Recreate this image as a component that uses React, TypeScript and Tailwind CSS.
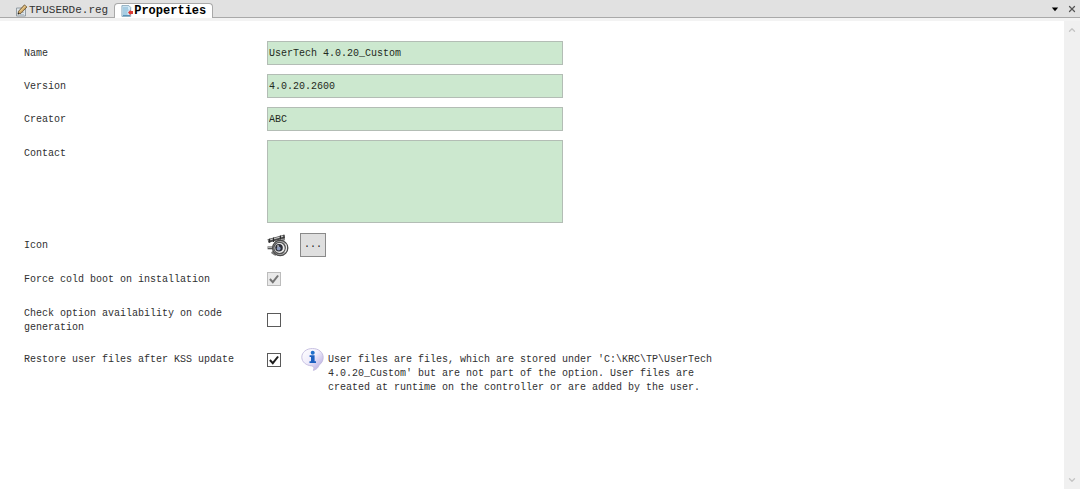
import { useState, type ReactNode } from 'react'
import { ChevronDown, ChevronUp, X } from 'lucide-react'

function EditIcon() {
  return (
    <svg className="w-[13px] h-[13px] shrink-0" viewBox="0 0 13 13" aria-hidden="true">
      <path d="M1.500 4h9v8h-9z" fill="#dfe6ea" stroke="#8b949c" strokeWidth="0.9" />
      <path d="M6 8.500h3M5 10.500h4" stroke="#a9b7c4" strokeWidth="0.8" />
      <path d="M3 10 3.600 7.200 9.400.9 11.900 3 6 9.300z" fill="#cfa765" stroke="#6e5835" strokeWidth="0.9" />
      <path d="M5 7.400 10.400 1.900" stroke="#f4dca6" strokeWidth="0.9" />
      <path d="m2.700 10.400.5-1.800 1.300 1.200z" fill="#222" />
    </svg>
  )
}

function PropertiesIcon() {
  return (
    <svg className="w-3 h-3 shrink-0" viewBox="0 0 12 12" aria-hidden="true">
      <path d="M.9.6h7l1.800 1.800v9H.9z" fill="#d3e9f6" stroke="#7a9db3" strokeWidth="0.8" />
      <path d="M2 3h5M2 5h5.500M2 7h4.500M2 9h4.500" stroke="#6fa9cc" strokeWidth="0.9" />
      <path d="M2 10.600h7" stroke="#3f81ac" strokeWidth="0.9" />
      <path d="M7 7.500 9.500 4.700v1.400H12v3H9.500v1.400z" fill="#dd3a35" />
    </svg>
  )
}

function OptionIcon() {
  return (
    <svg className="w-[22px] h-6 shrink-0" viewBox="0 0 22 24" aria-hidden="true">
      <path d="M1 8 17.500 3.400" stroke="#4a4a4a" strokeWidth="3.600" />
      <path d="M1.500 7.200 17 3" stroke="#cfcfcf" strokeWidth="1.100" />
      <path d="M2.600 5.800v4M6.500 4.600v4.400M13.400 2.400v4.400M17 1.800v4" stroke="#2c2c2c" strokeWidth="1.200" />
      <path d="M8 8.800 18 6.400" stroke="#888" strokeWidth="1.600" />
      <path d="M.6 14.800h7" stroke="#555" strokeWidth="3" />
      <path d="M1 14.200h6" stroke="#d6d6d6" strokeWidth="1" />
      <path d="M4.600 19 9 22" stroke="#777" strokeWidth="2.200" />
      <circle cx="13.200" cy="15" r="7.600" fill="#b4b4b4" stroke="#4b4b4b" strokeWidth="1.300" />
      <circle cx="12.600" cy="15" r="5.700" fill="#ececec" stroke="#555" strokeWidth="1.200" />
      <circle cx="12" cy="14.800" r="3.800" fill="#2b2d36" />
      <circle cx="11.700" cy="15.500" r="1.900" fill="#8c9abc" />
      <circle cx="11" cy="13" r="0.800" fill="#fff" />
      <path d="M18.600 10.800c1.400 2.600 1.200 6-.6 8.400" fill="none" stroke="#f0f0f0" strokeWidth="1" />
    </svg>
  )
}

function InfoIcon() {
  return (
    <svg className="w-[23px] h-6 shrink-0" viewBox="0 0 23 24" aria-hidden="true">
      <defs>
        <linearGradient id="bubble" x1="0" y1="0" x2="1" y2="1">
          <stop offset="0" stopColor="#ffffff" />
          <stop offset="0.45" stopColor="#f0edfb" />
          <stop offset="1" stopColor="#ab9fdc" />
        </linearGradient>
      </defs>
      <path
        d="M11.500 1.500C5.400 1.500.8 5.300.8 10.200c0 4.800 4.300 8.200 9.900 8.700 1.900.2 2.800 1.600 1.700 4.500 3.200-1 4.900-2.700 5.700-5.400 2.500-1.600 4.100-4.400 4.100-7.600C22.200 5.300 17.600 1.500 11.500 1.500z"
        fill="url(#bubble)"
        stroke="#c3bbdf"
        strokeWidth="0.900"
      />
      <circle cx="11.700" cy="5.700" r="2" fill="#1f6fcb" />
      <path d="M8.600 8.300h5v5.900h1.400v1.800H8.500v-1.800H10V10H8.600z" fill="#1b5fc0" />
    </svg>
  )
}

interface CheckProps {
  id: string
  defaultChecked?: boolean
  disabled?: boolean
}

function Check({ id, defaultChecked = false, disabled = false }: CheckProps) {
  const [checked, setChecked] = useState(defaultChecked)
  return (
    <span className="grid w-3.5 h-3.5 shrink-0">
      <input
        id={id}
        type="checkbox"
        checked={checked}
        disabled={disabled}
        onChange={(e) => setChecked(e.target.checked)}
        className="peer appearance-none col-start-1 row-start-1 w-3.5 h-3.5 border border-[#5a5a5a] bg-white disabled:border-[#bcbcbc] disabled:bg-[#e9e9e9]"
      />
      <svg
        className="col-start-1 row-start-1 w-3.5 h-3.5 pointer-events-none invisible peer-checked:visible text-[#1c1c1c] peer-disabled:text-[#747474]"
        viewBox="0 0 14 14"
        aria-hidden="true"
      >
        <path d="m2.900 7 2.900 3.200 5.300-6.700" fill="none" stroke="currentColor" strokeWidth="2" />
      </svg>
    </span>
  )
}

interface RowProps {
  label: string
  htmlFor: string
  top?: boolean
  children: ReactNode
}

function Row({ label, htmlFor, top = false, children }: RowProps) {
  return (
    <div className={top ? 'flex items-start' : 'flex items-center'}>
      <label htmlFor={htmlFor} className={top ? 'w-[243px] pr-3 pt-[7px] shrink-0' : 'w-[243px] pr-3 pt-0.5 shrink-0'}>
        {label}
      </label>
      {children}
    </div>
  )
}

const field = 'w-[296px] border border-[#b3bdb5] bg-[#cce8cf] px-px text-[#1f2a21] outline-none'

const textFields = [
  { id: 'name', label: 'Name', value: 'UserTech 4.0.20_Custom' },
  { id: 'version', label: 'Version', value: '4.0.20.2600' },
  { id: 'creator', label: 'Creator', value: 'ABC' },
]

export default function App() {
  return (
    <div className="flex flex-col h-screen bg-white font-['Liberation_Mono',monospace] text-[10px] leading-[14px] text-[#303030]">
      <header className="flex items-end justify-between h-[18px] shrink-0 border-b border-[#a9a9a9] bg-[#e1e1e1]">
        <div role="tablist" className="flex items-end pl-[15px]">
          <button role="tab" aria-selected="false" className="flex items-center h-[14px] pr-[6px] text-[11px] text-[#333]">
            <EditIcon />
            <span className="ml-px">TPUSERDe.reg</span>
          </button>
          <button
            role="tab"
            aria-selected="true"
            className="flex items-center h-[15px] -mb-px px-1.5 rounded-t border border-b-0 border-[#a9a9a9] bg-white text-[12px] font-bold text-black"
          >
            <PropertiesIcon />
            <span className="ml-px">Properties</span>
          </button>
        </div>
        <div className="flex items-center gap-2 h-full pr-[3px]">
          <button aria-label="Window list">
            <svg className="w-2 h-2" viewBox="0 0 8 8" aria-hidden="true">
              <path d="M.8 2.500h6.400L4 6.300z" fill="#000" />
            </svg>
          </button>
          <button aria-label="Close">
            <X className="w-2.5 h-2.5 text-[#555]" strokeWidth={3} />
          </button>
        </div>
      </header>

      <div className="h-[3px] shrink-0 bg-[#f3f3f3]" />

      <div className="flex flex-1 min-h-0">
        <form className="flex-1 min-w-0 pl-6 pt-5">
          <div className="flex flex-col gap-[9px]">
            {textFields.map((f) => (
              <Row key={f.id} label={f.label} htmlFor={f.id}>
                <input id={f.id} type="text" defaultValue={f.value} className={`${field} h-6`} />
              </Row>
            ))}
            <Row label="Contact" htmlFor="contact" top>
              <textarea id="contact" className={`${field} block h-[83px] resize-none`} />
            </Row>
          </div>

          <div className="pt-2.5">
            <Row label="Icon" htmlFor="icon">
              <OptionIcon />
              <button
                id="icon"
                type="button"
                className="ml-[11px] w-[26px] h-6 border border-[#8a8a8a] bg-[#dfdfdf] text-[#222]"
              >
                ...
              </button>
            </Row>
          </div>

          <div className="flex flex-col gap-[18px] pt-3.5">
            <Row label="Force cold boot on installation" htmlFor="cold-boot">
              <Check id="cold-boot" defaultChecked disabled />
            </Row>
            <Row label="Check option availability on code generation" htmlFor="availability">
              <Check id="availability" />
            </Row>
            <div className="flex items-start">
              <label htmlFor="restore" className="w-[243px] pr-3 shrink-0">
                Restore user files after KSS update
              </label>
              <Check id="restore" defaultChecked />
              <div className="flex items-start ml-5 -mt-1.5">
                <InfoIcon />
                <p className="w-[390px] pl-1 pt-1.5">
                  User files are files, which are stored under 'C:\KRC\TP\UserTech 4.0.20_Custom' but are not part of
                  the option. User files are created at runtime on the controller or are added by the user.
                </p>
              </div>
            </div>
          </div>
        </form>

        <div className="flex flex-col justify-between items-center w-4 shrink-0 py-1 bg-[#f0f0f0] text-[#c4c4c4]">
          <ChevronUp className="w-2.5 h-2.5" strokeWidth={3} />
          <ChevronDown className="w-2.5 h-2.5" strokeWidth={3} />
        </div>
      </div>
    </div>
  )
}
